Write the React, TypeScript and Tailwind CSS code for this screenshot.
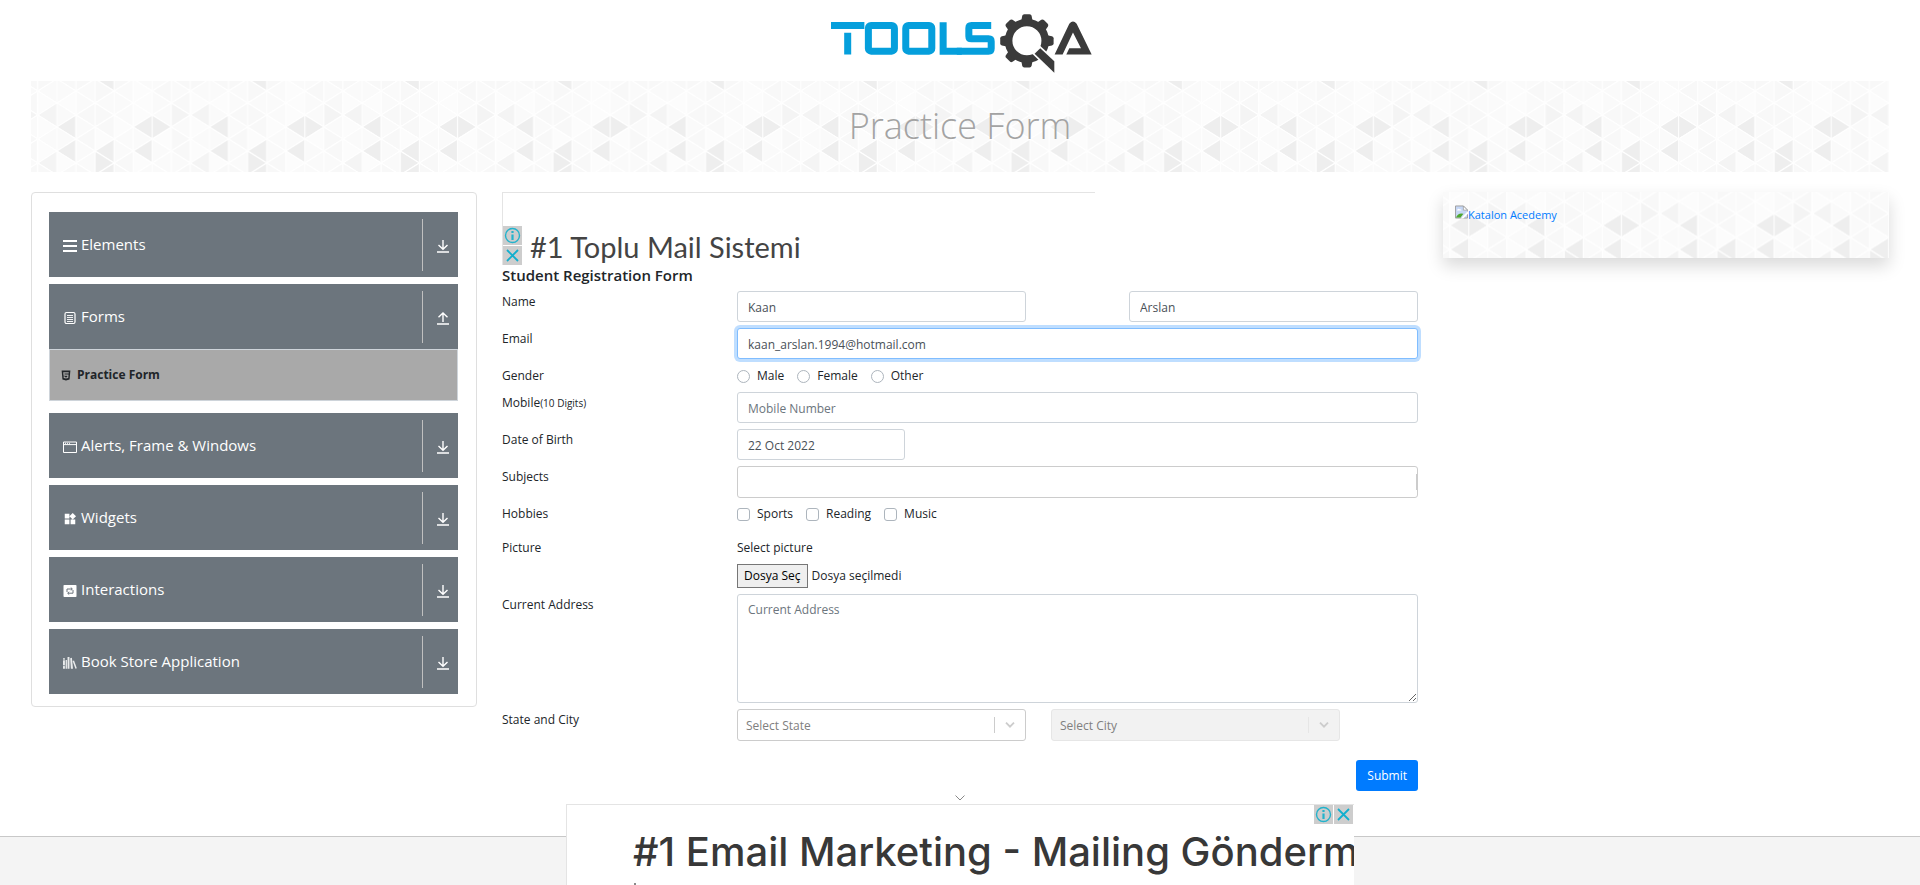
import { useId } from "react";
import type { ReactNode } from "react";
import { MdWidgets } from "react-icons/md";
import { SiHtml5 } from "react-icons/si";

const STEP_X = 19.08;
const STEP_Y = 12;
const SHADES = ["#fcfcfc", "#fafafa", "#f8f8f8", "#f4f4f4", "#eeeeee"];
const TILE = [
  "22421122",
  "11210211",
  "01110120",
  "12210133",
  "41204410",
  "12011021",
  "41414120",
  "01420113",
];

function TrianglePattern() {
  const id = useId();
  return (
    <svg className="absolute inset-0 h-full w-full" aria-hidden="true">
      <defs>
        <pattern
          id={id}
          x="50%"
          y="50%"
          width={STEP_X * 8}
          height={STEP_Y * 8}
          patternUnits="userSpaceOnUse"
          patternTransform="translate(12.7 0.5)"
        >
          {[-1, 0, 1, 2, 3, 4, 5, 6, 7, 8, 9].map((h) =>
            [0, 1, 2, 3, 4, 5, 6, 7].map((s) => {
              const shade = SHADES[Number(TILE[(h + 12) % 8][s])];
              const left = s * STEP_X;
              const right = left + STEP_X;
              const y = h * STEP_Y;
              const pointsLeft = (h + 8) % 2 === s % 2;
              const apex = pointsLeft ? left : right;
              const base = pointsLeft ? right : left;
              return (
                <path
                  key={`${h}:${s}`}
                  d={`M${apex} ${y}L${base} ${y - STEP_Y}V${y + STEP_Y}Z`}
                  fill={shade}
                  stroke="#fff"
                  strokeWidth="1"
                />
              );
            }),
          )}
        </pattern>
      </defs>
      <rect width="100%" height="100%" fill={`url(#${id})`} />
    </svg>
  );
}

function Logo() {
  return (
    <svg viewBox="60 38 788 182" className="h-[61px] w-[263px]" role="img" aria-label="TOOLSQA">
      <g fill="none" stroke="#059fdc" strokeWidth="21">
        <path d="M63 75H163M113 97V162" />
        <rect x="175" y="75" width="78" height="77" rx="8" />
        <rect x="287" y="75" width="78" height="77" rx="8" />
        <path d="M399 65V152H455" />
        <path d="M543 75H484Q476 75 476 83V107Q476 115 484 115H535Q543 115 543 123V144Q543 152 535 152H440" />
      </g>
      <g fill="#3b3b3b">
        {[0, 45, 90, 180, 225, 270, 315].map((a) => (
          <path key={a} d="M631 72L636 46Q637 41 642 41H658Q663 41 664 46L669 72Z" transform={`rotate(${a} 650 121)`} />
        ))}
      </g>
      <circle cx="650" cy="121" r="55" fill="none" stroke="#3b3b3b" strokeWidth="23" />
      <path d="M690 143L732 182V217L673 160Z" fill="#3b3b3b" stroke="#fff" strokeWidth="10" paintOrder="stroke" />
      <path
        d="M733 162L777 70Q788 56 799 70L844 162H768L777 143H812L788 96L757 162Z"
        fill="#3b3b3b"
      />
    </svg>
  );
}

function DropArrow({ up }: { up?: boolean }) {
  return (
    <svg viewBox="0 0 12 13" className="h-[13px] w-3" fill="none" stroke="#fff" strokeWidth="1.4" aria-hidden="true">
      <path d={up ? "M6 10V1M1.5 5.2L6 1L10.5 5.2M0 12H12" : "M6 0V9M1.5 5L6 9.3L10.5 5M0 12H12"} />
    </svg>
  );
}

const svgBox = "h-3.5 w-3.5 shrink-0";

function MenuIcon() {
  return (
    <svg viewBox="0 0 14 14" className={svgBox} fill="none" stroke="#fff" strokeWidth="2" aria-hidden="true">
      <path d="M0 2H14M0 7H14M0 12H14" />
    </svg>
  );
}

function FormsIcon() {
  return (
    <svg viewBox="0 0 14 14" className={svgBox} fill="none" stroke="#fff" aria-hidden="true">
      <rect x="2" y="1.5" width="10" height="11" rx="1.5" strokeWidth="1.2" />
      <path d="M4 4.5H10M4 6.5H10M4 8.5H10M4 10.5H10" strokeWidth="0.9" />
    </svg>
  );
}

function WindowIcon() {
  return (
    <svg viewBox="0 0 14 14" className={svgBox} fill="none" stroke="#fff" aria-hidden="true">
      <path d="M0.5 2H13.5V12.5H0.5ZM0.5 4.6H13.5" />
      <path d="M2 3.3H3M4 3.3H5M6 3.3H7" />
    </svg>
  );
}

function InteractionsIcon() {
  return (
    <svg viewBox="0 0 14 14" className={svgBox} aria-hidden="true">
      <rect x="0.5" y="1" width="13" height="12" rx="0.8" fill="#fff" />
      <path d="M4 8V5H9M7.8 3.6L9.4 5L7.8 6.4M10 6V9.2H5M6.2 7.8L4.6 9.2L6.2 10.6" fill="none" stroke="#6c757d" />
    </svg>
  );
}

function BooksIcon() {
  return (
    <svg viewBox="0 0 16 15" className={svgBox} fill="#e9ebec" aria-hidden="true">
      <path d="M0 2H2.2V14H0ZM3 4H4.5V14H3ZM5.2 0.5H7.4V14H5.2ZM8.2 2L10.2 1.6L11.4 14H9ZM11 5.2L12.6 4.6L15.8 13.4L14.2 14Z" />
      <path d="M0 10.5H2.2M0 4H2.2" stroke="#6c757d" strokeWidth="0.8" />
    </svg>
  );
}

function Section({ icon, title, open }: { icon: ReactNode; title: string; open?: boolean }) {
  return (
    <button
      type="button"
      aria-expanded={!!open}
      className="flex h-[65px] w-full items-center bg-[#6c757d] pr-[9px] pl-3.5 text-left text-white"
    >
      <span className="mt-0.5">{icon}</span>
      <span className="ml-1 flex-1 pb-0.5 text-[15px] leading-6">{title}</span>
      <span className="flex h-[52px] items-center border-l border-[#c0c0c0] pt-1 pl-3.5">
        <DropArrow up={open} />
      </span>
    </button>
  );
}

function AdBadges({ vertical }: { vertical?: boolean }) {
  return (
    <div className={vertical ? "flex flex-col gap-px" : "flex gap-px"}>
      <button type="button" aria-label="Ad information" className="flex h-[19px] w-[19px] items-center justify-center bg-[#cdcdcd]">
        <svg viewBox="0 0 17 17" className="h-[17px] w-[17px]" fill="none" stroke="#23b3cc">
          <circle cx="8.5" cy="8.5" r="7" strokeWidth="1.4" />
          <path d="M8.5 7.5V13M8.5 4V6" strokeWidth="2.2" />
        </svg>
      </button>
      <button type="button" aria-label="Close ad" className="flex h-[19px] w-[19px] items-center justify-center bg-[#cdcdcd]">
        <svg viewBox="0 0 17 17" className="h-[17px] w-[17px]" fill="none" stroke="#12afce" strokeWidth="1.8">
          <path d="M3 3L14 14M14 3L3 14" />
        </svg>
      </button>
    </div>
  );
}

const field =
  "h-[31px] w-full rounded-[3px] border border-[#ced4da] bg-white px-2.5 pt-0.5 text-xs text-[#495057] outline-none placeholder:text-[#6c757d]";

function Row({ label, htmlFor, note, className, children }: { label: string; htmlFor?: string; note?: string; className: string; children: ReactNode }) {
  return (
    <div className={`grid grid-cols-[235px_1fr] items-start ${className}`}>
      <label htmlFor={htmlFor} className="leading-[22px]">
        {label}
        {note && <small className="text-[10px]">{note}</small>}
      </label>
      {children}
    </div>
  );
}

function Choices({ type, name, options }: { type: "radio" | "checkbox"; name: string; options: string[] }) {
  return (
    <div className="flex h-[22px] items-center gap-[13px]">
      {options.map((o) => (
        <label key={o} className="flex items-center gap-[7px]">
          <input
            type={type}
            name={name}
            className={
              type === "radio"
                ? "h-[13px] w-[13px] appearance-none rounded-full border border-[#adb5bd] bg-white"
                : "h-[13px] w-[13px] appearance-none rounded-[3px] border border-[#adb5bd] bg-white"
            }
          />
          {o}
        </label>
      ))}
    </div>
  );
}

function Picker({ id, label, disabled }: { id: string; label: string; disabled?: boolean }) {
  return (
    <div
      className={
        disabled
          ? "flex h-8 items-center rounded-[3px] border border-[#e6e6e6] bg-[#f2f2f2]"
          : "flex h-8 items-center rounded-[3px] border border-[#ccc] bg-white"
      }
    >
      <select id={id} aria-label={label} disabled={disabled} className="h-full min-w-0 flex-1 appearance-none bg-transparent pt-0.5 pl-2 text-[#808080] opacity-100 outline-none">
        <option>{label}</option>
      </select>
      <span className={disabled ? "h-4 w-px bg-[#e6e6e6]" : "h-4 w-px bg-[#ccc]"} />
      <svg viewBox="0 0 10 6" className="mx-2.5 h-1.5 w-2.5" fill="none" stroke="#ccc" strokeWidth="1.8" aria-hidden="true">
        <path d="M1 0.7L5 4.7L9 0.7" />
      </svg>
    </div>
  );
}

export default function App() {
  return (
    <div className="relative flex h-screen flex-col overflow-hidden bg-white font-['Open_Sans','Noto_Sans',sans-serif] text-xs text-[#212529]">
      <header className="flex justify-center pt-[13px] pb-[7px] pl-0.5">
        <a href="#home">
          <Logo />
        </a>
      </header>

      <div className="relative mx-[31px] flex h-[91px] items-center justify-center">
        <TrianglePattern />
        <h1 className="relative pb-0.5 text-[36px] leading-[48px] font-light text-[#a3a3a3]">Practice Form</h1>
      </div>

      <div className="mx-[31px] mt-5 grid flex-1 grid-cols-[446px_1fr_446px] items-start gap-[25px]">
        <nav className="rounded-[4px] border border-[#dfdfdf] pt-[19px] pr-[18px] pb-3 pl-[17px]">
          <div className="flex flex-col gap-[7px]">
            <Section icon={<MenuIcon />} title="Elements" />
            <div className="pb-[5px]">
              <Section icon={<FormsIcon />} title="Forms" open />
              <a href="#practice-form" className="flex h-[52px] items-center border border-[#ced4da] bg-[#a9a9a9] pl-[11px] font-bold">
                <SiHtml5 className="mr-1.5 h-[11px] w-[10px]" />
                Practice Form
              </a>
            </div>
            <Section icon={<WindowIcon />} title="Alerts, Frame &amp; Windows" />
            <Section icon={<MdWidgets className={svgBox} />} title="Widgets" />
            <Section icon={<InteractionsIcon />} title="Interactions" />
            <Section icon={<BooksIcon />} title="Book Store Application" />
          </div>
        </nav>

        <main>
          <div className="flex h-[73px] w-[593px] items-end border-t border-l border-[#e4e4e4]">
            <AdBadges vertical />
            <p className="ml-2 font-[Lato,sans-serif] text-[29px] leading-9 text-[#444]">#1 Toplu Mail Sistemi</p>
          </div>
          <form onSubmit={(e) => e.preventDefault()}>
            <h2 className="text-[15px] leading-5 font-semibold">Student Registration Form</h2>
            <Row label="Name" htmlFor="first" className="mt-1.5">
              <div className="flex justify-between">
                <input id="first" defaultValue="Kaan" aria-label="First Name" className={`${field} max-w-[289px]`} />
                <input defaultValue="Arslan" aria-label="Last Name" className={`${field} max-w-[289px]`} />
              </div>
            </Row>
            <Row label="Email" htmlFor="email" className="mt-1.5">
              <input
                id="email"
                type="email"
                defaultValue="kaan_arslan.1994@hotmail.com"
                className="h-[31px] w-full rounded-[3px] border border-[#80bdff] bg-white px-2.5 pt-0.5 text-[#495057] shadow-[0_0_0_3px_rgba(0,123,255,0.25)] outline-none"
              />
            </Row>
            <Row label="Gender" className="mt-1.5">
              <Choices type="radio" name="gender" options={["Male", "Female", "Other"]} />
            </Row>
            <Row label="Mobile" note="(10 Digits)" htmlFor="mobile" className="mt-[5px]">
              <input id="mobile" placeholder="Mobile Number" className={field} />
            </Row>
            <Row label="Date of Birth" htmlFor="dob" className="mt-1.5">
              <input id="dob" defaultValue="22 Oct 2022" className={`${field} max-w-[168px]`} />
            </Row>
            <Row label="Subjects" htmlFor="subjects" className="mt-1.5">
              <div className="flex h-8 items-center rounded-[3px] border border-[#ccc]">
                <input id="subjects" className="h-full min-w-0 flex-1 px-2 outline-none" />
                <span className="h-4 w-px bg-[#ccc]" />
              </div>
            </Row>
            <Row label="Hobbies" className="mt-[5px]">
              <Choices type="checkbox" name="hobbies" options={["Sports", "Reading", "Music"]} />
            </Row>
            <Row label="Picture" htmlFor="picture" className="mt-3">
              <div>
                <label htmlFor="picture" className="block leading-[22px]">Select picture</label>
                <div className="mt-[5px] flex items-center gap-1">
                  <button id="picture" type="button" className="h-6 border border-[#767676] bg-[#efefef] px-1.5 text-black">
                    Dosya Seç
                  </button>
                  <span>Dosya seçilmedi</span>
                </div>
              </div>
            </Row>
            <Row label="Current Address" htmlFor="address" className="mt-1.5">
              <textarea
                id="address"
                placeholder="Current Address"
                className="block h-[109px] w-full resize rounded-[3px] border border-[#ced4da] px-2.5 py-[5px] leading-5 outline-none placeholder:text-[#6c757d]"
              />
            </Row>
            <Row label="State and City" htmlFor="state" className="mt-1.5">
              <div className="grid grid-cols-[289px_289px] gap-[25px]">
                <Picker id="state" label="Select State" />
                <Picker id="city" label="Select City" disabled />
              </div>
            </Row>
            <div className="mt-[19px] flex justify-end">
              <button type="submit" className="h-[31px] rounded-[3px] bg-[#007bff] px-[11px] text-white">
                Submit
              </button>
            </div>
          </form>
        </main>

        <aside className="relative h-[66px] shadow-[0_8px_16px_rgba(0,0,0,0.15)]">
          <TrianglePattern />
          <a href="#katalon" className="relative flex items-start px-3 pt-[13px] text-[11px] leading-5 text-[#007bff]">
            <svg viewBox="0 0 14 14" className="h-3.5 w-[13px]" aria-hidden="true">
              <path d="M0.5 0.5H9L13.5 5V13.5H0.5Z" fill="#c6d7f5" stroke="#9a9a9a" />
              <path d="M2 5.5Q3 2.5 5 4Q7 4 7 5.5Z" fill="#fff" />
              <path d="M1 13Q4 7 9 9L6 13Z" fill="#4ea72e" />
              <path d="M14 6L6 14H9L14 9Z" fill="#fff" />
              <path d="M9 0.5V5H13.5Z" fill="#fff" stroke="#9a9a9a" strokeWidth="0.8" />
            </svg>
            Katalon Acedemy
          </a>
        </aside>
      </div>

      <footer className="h-[49px] shrink-0 border-t border-[#c8c8c8] bg-[#f4f4f4]" />

      <div className="absolute bottom-0 left-1/2 w-[788px] -translate-x-1/2">
        <button type="button" aria-label="Collapse ad" className="mx-auto flex h-[13px] w-10 items-center justify-center">
          <svg viewBox="0 0 10 6" className="h-1.5 w-2.5" fill="none" stroke="#888">
            <path d="M0.5 0.5L5 5L9.5 0.5" />
          </svg>
        </button>
        <div className="relative h-[81px] overflow-hidden border-t border-l border-[#e4e4e4] bg-white">
          <p className="pt-[23px] pl-[66px] font-[Inter,sans-serif] text-[40px] leading-[48px] font-medium whitespace-nowrap text-[#383838]">
            #1 Email Marketing - Mailing Gönderm
          </p>
          <div className="absolute top-0 right-px">
            <AdBadges />
          </div>
          <span className="absolute bottom-0 left-[67px] h-0.5 w-0.5 bg-[#8a8a8a]" />
        </div>
      </div>
    </div>
  );
}
